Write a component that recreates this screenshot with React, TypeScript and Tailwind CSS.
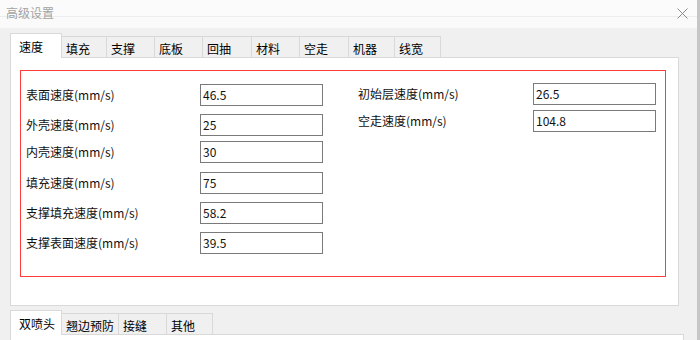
import React from 'react';

const topTabs = [
  { label: '速度', w: 'w-[52px]' },
  { label: '填充', w: 'w-[45px]' },
  { label: '支撑', w: 'w-[48px]' },
  { label: '底板', w: 'w-[48px]' },
  { label: '回抽', w: 'w-[49px]' },
  { label: '材料', w: 'w-[48px]' },
  { label: '空走', w: 'w-[49px]' },
  { label: '机器', w: 'w-[46px]' },
  { label: '线宽', w: 'w-[46px]' },
];

const bottomTabs = [
  { label: '双喷头', w: 'w-[52px]' },
  { label: '翘边预防', w: 'w-[57px]' },
  { label: '接缝', w: 'w-[48px]' },
  { label: '其他', w: 'w-[46px]' },
];

const leftFields = [
  { label: '表面速度(mm/s)', value: '46.5', mt: 'mt-0' },
  { label: '外壳速度(mm/s)', value: '25', mt: 'mt-[8px]' },
  { label: '内壳速度(mm/s)', value: '30', mt: 'mt-[5px]' },
  { label: '填充速度(mm/s)', value: '75', mt: 'mt-[9px]' },
  { label: '支撑填充速度(mm/s)', value: '58.2', mt: 'mt-[8px]' },
  { label: '支撑表面速度(mm/s)', value: '39.5', mt: 'mt-[8px]' },
];

const rightFields = [
  { label: '初始层速度(mm/s)', value: '26.5', mt: 'mt-0' },
  { label: '空走速度(mm/s)', value: '104.8', mt: 'mt-[5px]' },
];

type Tab = { label: string; w: string };

const TabStrip: React.FC<{ tabs: Tab[] }> = ({ tabs }) => (
  <div className="flex items-end pl-[10px] shrink-0">
    {tabs.map((t, i) =>
      i === 0 ? (
        <div
          key={t.label}
          className={`${t.w} h-[25px] bg-white border border-b-0 border-[#d9d9d9] pl-[8px] pt-[5px] text-[12px] leading-[16px] text-black -mb-px relative z-10`}
        >
          {t.label}
        </div>
      ) : (
        <div
          key={t.label}
          className={`${t.w} h-[21px] bg-[#f0f0f0] border border-l-0 border-b-0 border-[#d9d9d9] pl-[4px] pt-[4px] text-[12px] leading-[15px] text-black`}
        >
          {t.label}
        </div>
      )
    )}
  </div>
);

const Field: React.FC<{ label: string; value: string; mt: string; labelW: string }> = ({ label, value, mt, labelW }) => (
  <div className={`flex items-center ${mt}`}>
    <div className={`${labelW} text-[12px] leading-[16px] text-[#111]`}>{label}</div>
    <div className="w-[123px] h-[22px] border border-[#7a7a7a] bg-white pl-[2px] text-[12px] leading-[20px] text-[#111]">
      {value}
    </div>
  </div>
);

export default function App() {
  return (
    <div
      className="w-[700px] h-[340px] overflow-hidden flex bg-[#f0f0f0]"
      style={{ fontFamily: '"Noto Sans CJK SC", "Noto Sans", sans-serif' }}
    >
      <div className="w-[697px] flex flex-col">
        {/* title bar */}
        <div className="relative h-[28px] shrink-0 bg-[#fafafa]">
          <div className="h-[17px] border-b border-[#ededed] bg-[#fbfbfb]" />
          <div className="absolute left-[6px] top-[5px] text-[12px] leading-[16px] text-[#a3a3a3]">高级设置</div>
          <svg className="absolute left-[677px] top-[8px]" width="11" height="11" viewBox="0 0 11 11">
            <path d="M0.5 0.5 L10.5 10.5 M10.5 0.5 L0.5 10.5" stroke="#8a8a8a" strokeWidth="1" fill="none" />
          </svg>
        </div>

        <div className="pt-[5px] shrink-0">
          <TabStrip tabs={topTabs} />
          <div className="ml-[10px] w-[669px] h-[249px] bg-white border border-[#d9d9d9] pt-[12px] pl-[9px]">
            <div className="w-[646px] h-[207px] border border-[#ff3b3b] pl-[5px] pt-[13px] flex">
              <div className="flex flex-col w-[332px]">
                {leftFields.map(f => (
                  <Field key={f.label} {...f} labelW="w-[174px]" />
                ))}
              </div>
              <div className="flex flex-col -mt-px">
                {rightFields.map(f => (
                  <Field key={f.label} {...f} labelW="w-[175px]" />
                ))}
              </div>
            </div>
          </div>
        </div>

        <div className="pt-[4px] shrink-0">
          <TabStrip tabs={bottomTabs} />
          <div className="ml-[10px] w-[674px] h-[20px] bg-white border border-[#d9d9d9]" />
        </div>
      </div>
      <div className="w-[3px] h-full bg-[#c6c6c6]" />
    </div>
  );
}
